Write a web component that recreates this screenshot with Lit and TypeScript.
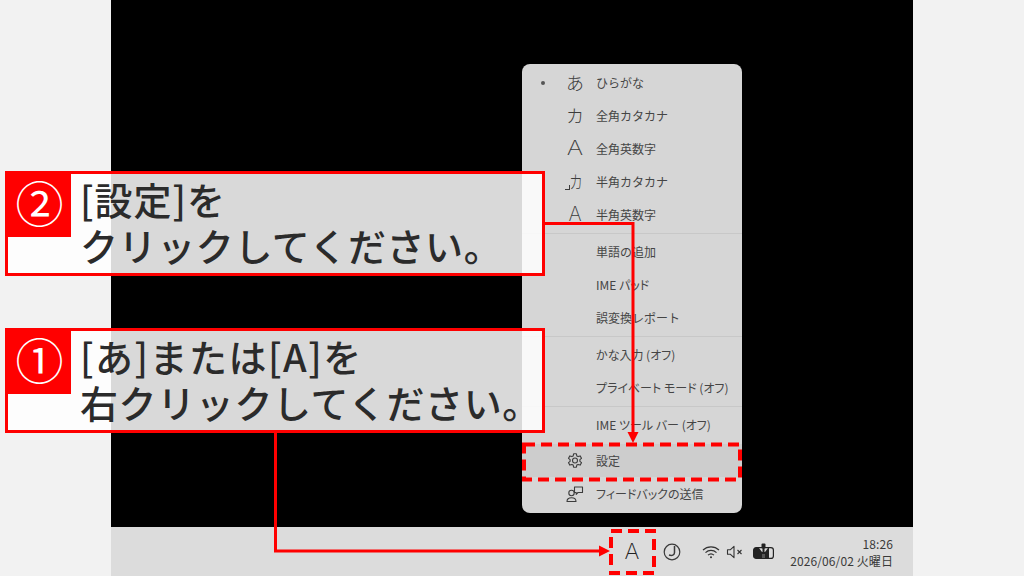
import { LitElement, html, css, svg } from "lit";
import { customElement } from "lit/decorators.js";

const gear = svg`<svg width="18" height="18" viewBox="0 0 18 18" fill="none" stroke="#3c3c3c" stroke-width="1.1" stroke-linejoin="round"><path d="M7.600 1.800h2.800l.4 2.100 1.300.7 2-.7 1.400 2.400-1.600 1.400v1.600l1.600 1.400-1.400 2.400-2-.7-1.300.7-.4 2.100H7.600l-.4-2.100-1.300-.7-2 .7-1.400-2.400 1.600-1.400V7.700L2.500 6.300l1.400-2.400 2 .7 1.300-.7z"/><circle cx="9" cy="8.500" r="2.500"/></svg>`;
const feedback = svg`<svg width="18" height="18" viewBox="0 0 18 18" fill="none" stroke="#3c3c3c" stroke-width="1.100" stroke-linejoin="round"><circle cx="5.500" cy="8" r="2.700"/><path d="M1 16.500c0-2.300 1.500-3.800 4.500-3.800s4.500 1.500 4.500 3.800z"/><path d="M8.500 2h8v5.500h-4.500l-1.800 1.800V7.500H8.500z"/></svg>`;
const moon = svg`<svg width="18" height="18" viewBox="0 0 18 18" fill="none" stroke="#3a3a3a" stroke-width="1.200"><circle cx="9" cy="9" r="7.800"/><path d="M11.500 3v6.500c0 2.500-2.500 3.500-5.500 2.500" stroke-width="1.500"/></svg>`;
const wifi = svg`<svg width="18" height="14" viewBox="0 0 18 14" fill="none" stroke="#333" stroke-width="1.200"><path d="M1 5c4.500-4.300 11.500-4.300 16 0"/><path d="M3.500 7.600c3.100-2.900 7.900-2.900 11 0"/><path d="M6 10.100c1.700-1.500 4.300-1.500 6 0"/><circle cx="9" cy="12.300" r="1" fill="#333" stroke="none"/></svg>`;
const mute = svg`<svg width="18" height="14" viewBox="0 0 18 14" fill="none" stroke="#333" stroke-width="1.100"><path d="M1.500 4.800h2.700L8 1.300v11.400L4.200 9.200H1.500z" stroke-linejoin="round"/><path d="M11.500 5l4 4M15.500 5l-4 4"/></svg>`;
const battery = svg`<svg width="21" height="17" viewBox="0 0 21 17"><rect x="0.600" y="4.600" width="19.800" height="10.800" rx="2.500" fill="none" stroke="#222" stroke-width="1.200"/><path d="M1 5h5l3 4v6H1z" fill="#222"/><path d="M12 9l3-4h1v10H9V9z" fill="#222"/><path d="M9 11h3v4H9z" fill="#555"/><rect x="8.500" y="0.500" width="4" height="5" rx="1" fill="#222"/><rect x="9.500" y="5" width="2" height="4" fill="#222"/></svg>`;

type Row = { text: string; mark?: any; selected?: boolean; active?: boolean; narrow?: boolean };

const groups: Row[][] = [
  [
    { text: "ひらがな", mark: "あ", selected: true },
    { text: "全角カタカナ", mark: "カ" },
    { text: "全角英数字", mark: "A" },
    { text: "半角カタカナ", mark: "half" },
    { text: "半角英数字", mark: "a" },
  ],
  [{ text: "単語の追加" }, { text: "IME パッド", narrow: true }, { text: "誤変換レポート" }],
  [{ text: "かな入力 (オフ)", narrow: true }, { text: "プライベート モード (オフ)", narrow: true }],
];
const last: Row[] = [
  { text: "IME ツール バー (オフ)", narrow: true },
  { text: "設定", mark: gear, active: true },
  { text: "フィードバックの送信", mark: feedback, narrow: true },
];

@customElement("app-root")
export class AppRoot extends LitElement {
  static styles = css`
    :host {
      display: block;
      width: 1024px;
      height: 576px;
      position: relative;
      overflow: hidden;
      background: #f2f2f2;
      font-family: "Noto Sans CJK JP", "Noto Sans", sans-serif;
    }
    .screen {
      width: 802px;
      height: 576px;
      margin-left: 111px;
      background: #000;
      display: flex;
      flex-direction: column;
      justify-content: flex-end;
    }
    .taskbar {
      height: 49px;
      background: #dcdcdc;
      display: flex;
      align-items: center;
      justify-content: flex-end;
      padding-right: 20px;
      color: #333;
    }
    .ime {
      font-family: "Inter", sans-serif;
      font-weight: 200;
      font-size: 21px;
      color: #222;
      width: 20px;
      text-align: center;
      margin-right: 21px;
      transform: scaleX(1.080);
    }
    .tray {
      display: flex;
      align-items: center;
    }
    .moon { margin-right: 21px; display: flex; }
    .wifi { margin-right: 6px; display: flex; }
    .mute { margin-right: 9px; display: flex; }
    .bat { margin-right: 16px; display: flex; }
    .clock {
      font-size: 12px;
      line-height: 17px;
      text-align: right;
      color: #3a3a3a;
      letter-spacing: 0.1px;
    }
    .menu {
      position: absolute;
      left: 522px;
      top: 64px;
      width: 220px;
      height: 449px;
      box-sizing: border-box;
      padding-top: 1.500px;
      background: #d6d6d6;
      border-radius: 8px;
      display: flex;
      flex-direction: column;
      color: #454545;
      font-size: 12px;
    }
    .group {
      display: flex;
      flex-direction: column;
    }
    .sep {
      height: 1px;
      background: #c8c8c8;
      margin: 2px 0 1px;
    }
    .row {
      height: 33px;
      flex: none;
      display: flex;
      align-items: center;
      position: relative;
      padding-left: 74px;
      white-space: nowrap;
    }
    .row.narrow {
      font-feature-settings: "palt";
    }
    .row.active {
      background: #cdcdcd;
      margin-top: 3.500px;
    }
    .dot {
      position: absolute;
      left: 19px;
      top: 15px;
      width: 4px;
      height: 4px;
      border-radius: 50%;
      background: #555;
    }
    .mark {
      position: absolute;
      left: 43px;
      top: 0;
      width: 20px;
      height: 33px;
      display: flex;
      align-items: center;
      justify-content: center;
      font-size: 18px;
      font-weight: 300;
      color: #3c3c3c;
    }
    .mark.latin {
      font-family: "Inter", sans-serif;
      font-weight: 200;
      font-size: 20px;
      transform: scaleX(1.250);
    }
    .mark.narrow {
      font-family: "Inter", sans-serif;
      font-weight: 200;
      font-size: 20px;
    }
    .hook i {
      font-style: normal;
      display: inline-block;
      transform: scaleX(0.750);
      margin-left: -3px;
    }
    .hook b {
      display: inline-block;
      width: 7px;
      height: 4px;
      border-right: 1px solid #3c3c3c;
      border-bottom: 1px solid #3c3c3c;
      transform: translateY(6px);
    }
    .callout {
      position: absolute;
      left: 5px;
      width: 540px;
      height: 105px;
      box-sizing: border-box;
      border: 3px solid #f00;
      background: rgba(255, 255, 255, 0.850);
      display: flex;
      align-items: flex-start;
    }
    .c2 { top: 171px; }
    .c1 { top: 328px; }
    .badge {
      width: 63px;
      height: 63px;
      flex: none;
      background: #f00;
      color: #fff;
      font-size: 48px;
      line-height: 54px;
      text-align: center;
    }
    .txt {
      margin: 2px 0 0 9px;
      font-size: 38px;
      line-height: 46px;
      font-weight: 500;
      letter-spacing: 0.600px;
      color: #2b2b2b;
      white-space: nowrap;
    }
    .c1 .first { letter-spacing: 1.500px; }
    .c2 .first { letter-spacing: 1px; }
    .overlay {
      position: absolute;
      left: 0;
      top: 0;
      pointer-events: none;
    }
  `;

  private mark(r: Row) {
    if (!r.mark) return null;
    if (r.mark === "half") {
      return html`<span class="mark hook"><b></b><i>カ</i></span>`;
    }
    if (r.mark === "A") return html`<span class="mark latin">A</span>`;
    if (r.mark === "a") return html`<span class="mark narrow">A</span>`;
    return html`<span class="mark">${r.mark}</span>`;
  }

  private row(r: Row) {
    return html`<div class="row ${r.active ? "active" : ""} ${r.narrow ? "narrow" : ""}">
      ${r.selected ? html`<span class="dot"></span>` : null}
      ${this.mark(r)}${r.text}
    </div>`;
  }

  render() {
    return html`
      <div class="screen">
        <div class="taskbar">
          <span class="ime">A</span>
          <div class="tray">
            <span class="moon">${moon}</span>
            <span class="wifi">${wifi}</span>
            <span class="mute">${mute}</span>
            <span class="bat">${battery}</span>
          </div>
          <div class="clock">18:26<br />2026/06/02 火曜日</div>
        </div>
      </div>
      <div class="menu">
        ${groups.map(
          (g) => html`<div class="group">${g.map((r) => this.row(r))}</div><div class="sep"></div>`
        )}
        <div class="group">${last.map((r) => this.row(r))}</div>
      </div>
      <div class="callout c2">
        <div class="badge">②</div>
        <div class="txt"><span class="first">[設定]を</span><br />クリックしてください。</div>
      </div>
      <div class="callout c1">
        <div class="badge">①</div>
        <div class="txt"><span class="first">[あ]または[A]を</span><br />右クリックしてください。</div>
      </div>
      <svg class="overlay" width="1024" height="576" viewBox="0 0 1024 576" fill="none">
        <path d="M545 223.500H633V433" stroke="#f00" stroke-width="3"/>
        <path d="M627.500 432h11l-5.500 11z" fill="#f00"/>
        <path d="M275.500 432V551H600" stroke="#f00" stroke-width="3"/>
        <path d="M599 545.500v11l11-5.500z" fill="#f00"/>
        <rect x="524" y="444.500" width="216" height="35" stroke="#f00" stroke-width="4" stroke-dasharray="11 6"/>
        <rect x="611" y="531" width="43" height="42" stroke="#f00" stroke-width="4" stroke-dasharray="11 6"/>
      </svg>
    `;
  }
}
